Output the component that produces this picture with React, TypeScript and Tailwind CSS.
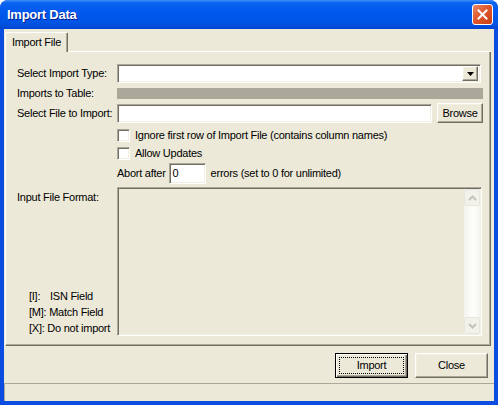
const sunken =
  "border border-t-[#ACA899] border-l-[#ACA899] border-r-white border-b-white shadow-[inset_1px_1px_0_#716F64,inset_-1px_-1px_0_#F1EFE2]";
const raised =
  "border border-t-white border-l-white border-r-[#716F64] border-b-[#716F64] shadow-[inset_-1px_-1px_0_#ACA899,inset_1px_1px_0_#F1EFE2] bg-[#ECE9D8]";

function TitleBar() {
  return (
    <div className="flex h-[29px] items-center justify-between bg-[linear-gradient(to_bottom,#3D8FF5_0%,#0A62F0_10%,#0058EE_45%,#0054E3_80%,#0044D0_100%)] pl-[7px] pr-[5px]">
      <span className="text-[13px] font-bold text-white [text-shadow:1px_1px_0_#0A1E8C]">Import Data</span>
      <div className="flex h-[21px] w-[21px] items-center justify-center rounded-[3px] border border-white bg-[linear-gradient(135deg,#E8896A_0%,#E0582C_45%,#C83E14_100%)]">
        <svg width="11" height="11" viewBox="0 0 11 11">
          <path d="M1.5 1.5 L9.5 9.5 M9.5 1.5 L1.5 9.5" stroke="white" strokeWidth="2" strokeLinecap="square" />
        </svg>
      </div>
    </div>
  );
}

function Checkbox({ label }: { label: string }) {
  return (
    <div className="flex h-[13px] items-center">
      <div className={`h-[13px] w-[13px] bg-white ${sunken}`} />
      <span className="ml-[5px] whitespace-nowrap leading-none">{label}</span>
    </div>
  );
}

function Chevron({ up }: { up?: boolean }) {
  return (
    <svg width="9" height="6" viewBox="0 0 9 6">
      <path
        d={up ? "M1 5 L4.5 1.5 L8 5" : "M1 1 L4.5 4.5 L8 1"}
        stroke="#C3C3B8"
        strokeWidth="2"
        fill="none"
      />
    </svg>
  );
}

function ScrollBar() {
  return (
    <div className="flex w-[16px] flex-col bg-[linear-gradient(to_right,#F4F3EE,#FEFEFB_60%,#F4F3EE)]">
      <div className="flex h-[17px] items-center justify-center rounded-[2px] border border-[#E6E5DE] bg-[#F2F1EA]">
        <Chevron up />
      </div>
      <div className="flex-1" />
      <div className="flex h-[17px] items-center justify-center rounded-[2px] border border-[#E6E5DE] bg-[#F2F1EA]">
        <Chevron />
      </div>
    </div>
  );
}

export default function App() {
  return (
    <div className="h-[405px] w-[498px] bg-white font-['Liberation_Sans',Arial,sans-serif] text-[11px] tracking-[-0.25px] text-black">
      <div className="flex h-full flex-col overflow-hidden rounded-t-[8px] bg-[#0A4DE0]">
        <TitleBar />
        <div className="mx-[4px] mb-[4px] flex flex-1 flex-col bg-[#ECE9D8]">
          {/* tabs */}
          <div className="ml-[1px] mr-[3px] mt-[3px] flex h-[20px] items-stretch">
            <div className="flex w-[63px] items-center justify-center rounded-t-[2px] border-l border-r border-t border-l-white border-r-[#716F64] border-t-white shadow-[inset_-1px_0_0_#ACA899]">
              Import File
            </div>
            <div className="flex-1 border-b border-white" />
          </div>

          {/* panel */}
          <div className="ml-[1px] mr-[3px] flex h-[294px] flex-col border-b border-l border-r border-b-[#716F64] border-l-white border-r-[#716F64] pl-[11px] pt-[12px] shadow-[inset_-1px_-1px_0_#ACA899]">
            <div className="flex h-[19px] items-center">
              <span className="w-[100px] whitespace-nowrap leading-none">Select Import Type:</span>
              <div className={`flex h-[19px] w-[364px] items-center justify-end bg-white pr-[2px] ${sunken}`}>
                <div className={`flex h-[15px] w-[16px] items-center justify-center ${raised}`}>
                  <svg width="7" height="4" viewBox="0 0 7 4">
                    <path d="M0 0 H7 L3.5 4 Z" fill="black" />
                  </svg>
                </div>
              </div>
            </div>

            <div className="mt-[5px] flex h-[11px] items-center">
              <span className="w-[100px] whitespace-nowrap leading-none">Imports to Table:</span>
              <div className="h-[11px] w-[366px] bg-[#ACA899]" />
            </div>

            <div className="mt-[4px] flex h-[20px] items-center">
              <span className="w-[100px] whitespace-nowrap leading-none">Select File to Import:</span>
              <div className={`h-[19px] w-[315px] bg-white ${sunken}`} />
              <button className={`ml-[5px] h-[20px] w-[46px] ${raised}`}>Browse</button>
            </div>

            <div className="ml-[100px] mt-[6px]">
              <Checkbox label="Ignore first row of Import File (contains column names)" />
            </div>
            <div className="ml-[100px] mt-[5px]">
              <Checkbox label="Allow Updates" />
            </div>

            <div className="ml-[100px] mt-[3px] flex h-[21px] items-center">
              <span className="whitespace-nowrap leading-none">Abort after</span>
              <div className={`ml-[3px] flex h-[21px] w-[37px] items-center bg-white pl-[3px] ${sunken}`}>0</div>
              <span className="ml-[5px] whitespace-nowrap leading-none">errors (set to 0 for unlimited)</span>
            </div>

            <div className="mt-[3px] flex h-[149px]">
              <div className="flex w-[100px] flex-col justify-between">
                <span className="mt-[5px] whitespace-nowrap leading-none">Input File Format:</span>
                <div className="whitespace-nowrap pl-[12px] leading-[16px]">
                  <div>
                    <span className="inline-block w-[21px]">[I]:</span>ISN Field
                  </div>
                  <div>[M]: Match Field</div>
                  <div>[X]: Do not import</div>
                </div>
              </div>
              <div className={`flex w-[365px] justify-end bg-[#ECE9D8] p-[1px] ${sunken}`}>
                <ScrollBar />
              </div>
            </div>
          </div>

          {/* buttons */}
          <div className="mr-[6px] mt-[7px] flex justify-end gap-[7px]">
            <button className="flex h-[25px] w-[73px] items-center justify-center border border-black bg-[#ECE9D8] p-[3px] shadow-[inset_1px_1px_0_white,inset_-1px_-1px_0_#716F64,inset_-2px_-2px_0_#ACA899]">
              <span className="flex h-full w-full items-center justify-center border border-dotted border-black">Import</span>
            </button>
            <button className={`h-[25px] w-[73px] ${raised}`}>Close</button>
          </div>

          <div className="mt-[5px] flex-1 border-l border-t border-[#ACA899]" />
        </div>
      </div>
    </div>
  );
}
